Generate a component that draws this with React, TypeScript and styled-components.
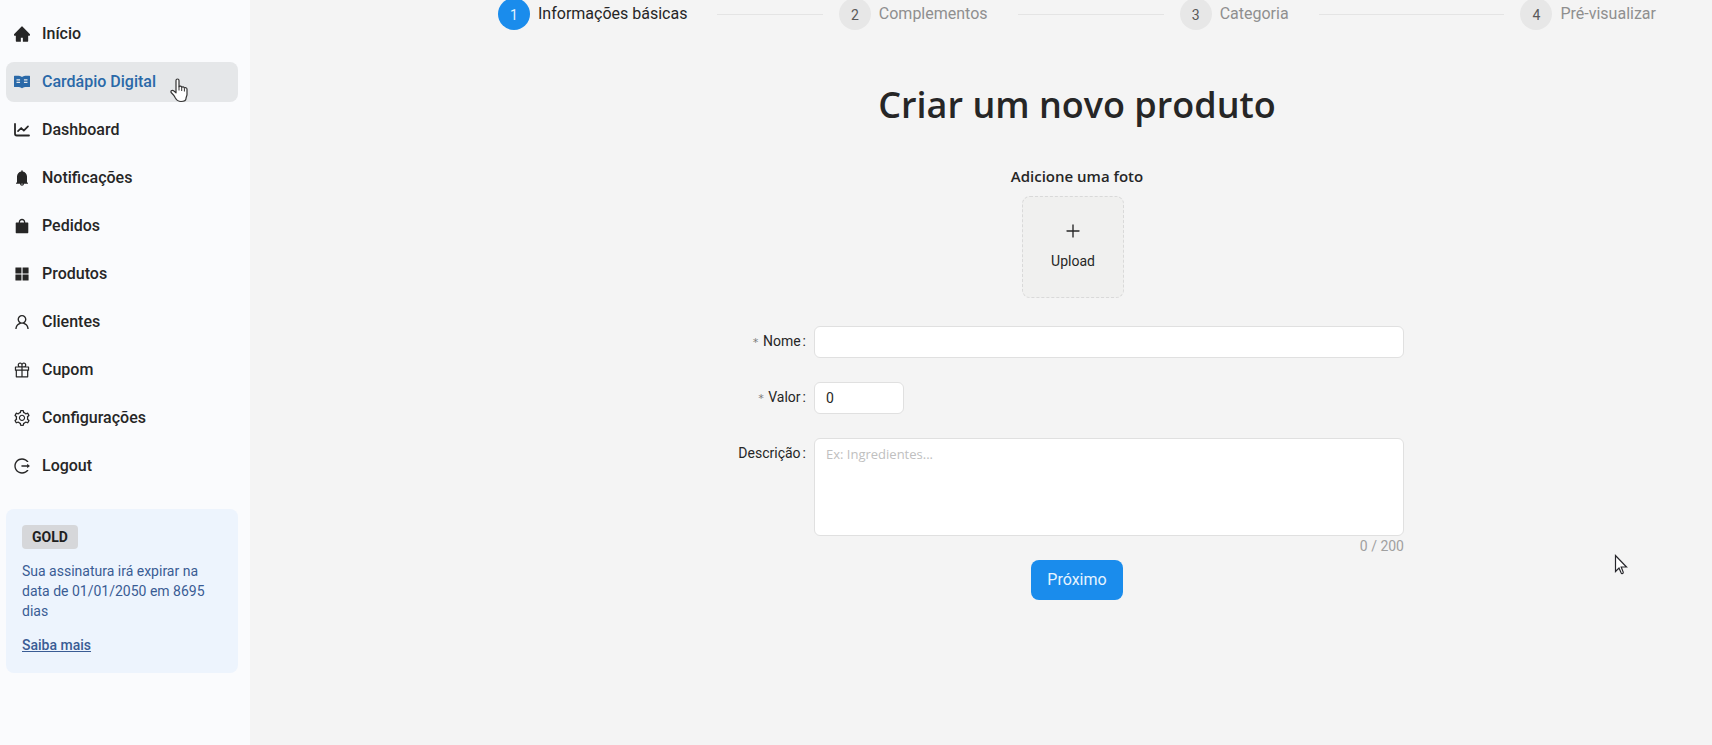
import React from "react";
import styled, { createGlobalStyle } from "styled-components";
import {
  AiFillAppstore,
  AiFillBell,
  AiFillHome,
  AiFillRead,
  AiFillShopping,
  AiOutlineGift,
  AiOutlineLogout,
  AiOutlinePlus,
  AiOutlineSetting,
  AiOutlineUser,
} from "react-icons/ai";

const GlobalStyle = createGlobalStyle`
  *, *::before, *::after { box-sizing: border-box; }
  body {
    margin: 0;
    background: #f4f4f4;
    color: #262626;
    font-family: Roboto, "Liberation Sans", sans-serif;
    font-size: 14px;
    line-height: 20px;
  }
  button, input, textarea { font: inherit; color: inherit; }
`;

const Page = styled.div`
  display: flex;
  min-height: 100vh;
`;

const Sidebar = styled.aside`
  flex: 0 0 250px;
  padding: 14px 12px 14px 6px;
  background: #fafbfd;
`;

const Menu = styled.nav`
  display: flex;
  flex-direction: column;
  gap: 8px;
`;

const MenuItem = styled.a<{ $active?: boolean }>`
  position: relative;
  display: flex;
  align-items: center;
  gap: 12px;
  height: 40px;
  padding: 0 8px;
  border-radius: 8px;
  font-size: 16px;
  font-weight: 500;
  text-decoration: none;
  color: ${(p) => (p.$active ? "#2a69a8" : "#262626")};
  background: ${(p) => (p.$active ? "#e5e7e9" : "transparent")};

  > svg { flex: none; }
`;

const HandCursor = styled.svg`
  position: absolute;
  left: 164px;
  top: 16px;
`;

const PlanCard = styled.section`
  margin-top: 23px;
  padding: 16px 16px 18px;
  border-radius: 8px;
  background: #edf4fd;
  color: #3a5c94;
`;

const PlanTag = styled.strong`
  display: inline-block;
  padding: 2px 10px;
  border-radius: 4px;
  background: #d6d7da;
  color: #1f1f1f;
  font-weight: 700;
`;

const PlanText = styled.p`
  margin: 12px 0 14px;
`;

const PlanLink = styled.a`
  color: inherit;
  font-weight: 500;
`;

const Main = styled.main`
  flex: 1;
  min-width: 0;
  padding: 0 56px 0 248px;
`;

const Steps = styled.ol`
  display: flex;
  gap: 16px;
  margin: -2px 0 0;
  padding: 0;
  list-style: none;
`;

const Step = styled.li<{ $current?: boolean }>`
  flex: 1;
  display: flex;
  align-items: center;
  font-size: 16px;
  white-space: nowrap;
  color: ${(p) => (p.$current ? "#262626" : "#8f8f8f")};

  &:not(:last-child)::after {
    content: "";
    flex: 1;
    height: 1px;
    margin-left: 30px;
    background: #e4e4e4;
  }

  &:last-child { flex: none; }
`;

const StepNumber = styled.span<{ $current?: boolean }>`
  width: 32px;
  height: 32px;
  margin-right: 8px;
  border-radius: 50%;
  font-size: 14px;
  line-height: 34px;
  text-align: center;
  color: ${(p) => (p.$current ? "#e6f4ff" : "#595959")};
  background: ${(p) => (p.$current ? "#1a8cec" : "#e7e7e7")};
`;

const Title = styled.h1`
  margin: 52px 0 0;
  font-family: "Open Sans", "Noto Sans", sans-serif;
  font-size: 36px;
  line-height: 46px;
  font-weight: 600;
  text-align: center;
`;

const PhotoTitle = styled.h2`
  margin: 36px 0 8px;
  font-family: "Open Sans", "Noto Sans", sans-serif;
  font-size: 15px;
  line-height: 24px;
  font-weight: 600;
  text-align: center;
`;

const UploadRow = styled.div`
  display: flex;
  justify-content: center;
  padding-right: 8px;
`;

const UploadButton = styled.button`
  display: flex;
  flex-direction: column;
  align-items: center;
  justify-content: center;
  gap: 12px;
  width: 102px;
  height: 102px;
  border: 1px dashed #d9d9d9;
  border-radius: 8px;
  background: #f0f0ef;
`;

const Form = styled.form`
  margin-top: 28px;
`;

const Field = styled.div`
  display: grid;
  grid-template-columns: 316fr 590fr 252fr;
  margin-bottom: 24px;

  &:last-of-type { margin-bottom: 4px; }
`;

const Label = styled.label`
  padding-right: 8px;
  line-height: 30px;
  text-align: right;

  &::after {
    content: ":";
    margin-left: 2px;
  }
`;

const Required = styled.span`
  margin-right: 4px;
  color: #7a7a7a;
  font-family: "DejaVu Sans Mono", monospace;
  font-size: 11px;
`;

const TextInput = styled.input<{ $short?: boolean }>`
  width: ${(p) => (p.$short ? "90px" : "100%")};
  height: 32px;
  padding: 0 11px;
  border: 1px solid #e0e0e0;
  border-radius: 6px;
  outline: none;
  background: #fff;
`;

const TextArea = styled.textarea`
  display: block;
  width: 100%;
  height: 98px;
  padding: 5px 11px;
  border: 1px solid #e0e0e0;
  border-radius: 6px;
  outline: none;
  resize: none;
  background: #fff;

  &::placeholder {
    color: #c0c0c0;
    font-family: "Open Sans", "Noto Sans", sans-serif;
    font-size: 13px;
    opacity: 1;
  }
`;

const Counter = styled.div`
  color: #a0a0a0;
  text-align: right;
`;

const NextButton = styled.button`
  display: block;
  height: 40px;
  margin: 0 auto;
  padding: 0 16px;
  border: 0;
  border-radius: 8px;
  background: #1a8cec;
  color: #e6f4ff;
  font-size: 16px;
`;

const ArrowCursor = styled.svg`
  position: fixed;
  left: 1614px;
  top: 554px;
`;

const tightBox = "64 64 896 896";

function ChartIcon() {
  return (
    <svg width="16" height="16" viewBox="0 0 16 16" fill="none" stroke="currentColor" strokeLinecap="round" aria-hidden="true">
      <path d="M1 2v9.800a1.700 1.700 0 0 0 1.700 1.700H15" strokeWidth="1.8" />
      <path d="M4 9.200 7.200 6l2.600 2.600L14 4.400" strokeWidth="1.7" strokeLinejoin="round" />
    </svg>
  );
}

const menu = [
  { label: "Início", icon: <AiFillHome size={16} viewBox={tightBox} /> },
  { label: "Cardápio Digital", icon: <AiFillRead size={16} viewBox={tightBox} />, active: true },
  { label: "Dashboard", icon: <ChartIcon /> },
  { label: "Notificações", icon: <AiFillBell size={16} viewBox={tightBox} /> },
  { label: "Pedidos", icon: <AiFillShopping size={16} viewBox={tightBox} /> },
  { label: "Produtos", icon: <AiFillAppstore size={16} viewBox={tightBox} /> },
  { label: "Clientes", icon: <AiOutlineUser size={16} viewBox={tightBox} /> },
  { label: "Cupom", icon: <AiOutlineGift size={16} viewBox={tightBox} /> },
  { label: "Configurações", icon: <AiOutlineSetting size={16} viewBox={tightBox} /> },
  { label: "Logout", icon: <AiOutlineLogout size={16} viewBox={tightBox} /> },
];

const steps = ["Informações básicas", "Complementos", "Categoria", "Pré-visualizar"];

export default function App() {
  return (
    <Page>
      <GlobalStyle />
      <Sidebar>
        <Menu>
          {menu.map(({ label, icon, active }) => (
            <MenuItem key={label} href="#" $active={active}>
              {icon}
              {label}
              {active && (
                <HandCursor width="20" height="25" viewBox="0 0 20 25" aria-hidden="true">
                  <path
                    d="M6 2.5c0-2 3-2 3 0v6.2c.4-1 2.6-.8 2.7.6.6-.9 2.6-.6 2.7.8.6-.8 2.6-.5 2.6 1.2v5.2c0 1.500-1 2.500-1 4 0 2.300-2 3-5 3-3.500 0-4.600-1.700-5.600-3.500-1-2-2.300-3.600-4-5.200-1.400-1.500.6-3.200 2.200-2l2.400 2z"
                    fill="#fff"
                    stroke="#333"
                    strokeWidth="1.2"
                    strokeLinejoin="round"
                  />
                  <path d="M9 8.500v4M11.700 9.500v3.500M14.400 10.500v3" stroke="#333" fill="none" />
                </HandCursor>
              )}
            </MenuItem>
          ))}
        </Menu>
        <PlanCard>
          <PlanTag>GOLD</PlanTag>
          <PlanText>Sua assinatura irá expirar na data de 01/01/2050 em 8695 dias</PlanText>
          <PlanLink href="#">Saiba mais</PlanLink>
        </PlanCard>
      </Sidebar>
      <Main>
        <Steps>
          {steps.map((name, i) => (
            <Step key={name} $current={i === 0}>
              <StepNumber $current={i === 0}>{i + 1}</StepNumber>
              {name}
            </Step>
          ))}
        </Steps>
        <Title>Criar um novo produto</Title>
        <PhotoTitle>Adicione uma foto</PhotoTitle>
        <UploadRow>
          <UploadButton type="button">
            <AiOutlinePlus size={16} viewBox={tightBox} />
            Upload
          </UploadButton>
        </UploadRow>
        <Form>
          <Field>
            <Label htmlFor="nome">
              <Required>*</Required>Nome
            </Label>
            <TextInput id="nome" type="text" />
          </Field>
          <Field>
            <Label htmlFor="valor">
              <Required>*</Required>Valor
            </Label>
            <TextInput id="valor" type="text" inputMode="decimal" defaultValue="0" $short />
          </Field>
          <Field>
            <Label htmlFor="descricao">Descrição</Label>
            <div>
              <TextArea id="descricao" maxLength={200} placeholder="Ex: Ingredientes..." />
              <Counter>0 / 200</Counter>
            </div>
          </Field>
          <NextButton type="button">Próximo</NextButton>
        </Form>
      </Main>
      <ArrowCursor width="14" height="22" viewBox="0 0 14 22" aria-hidden="true">
        <path
          d="M1.500 1.500v16l3.500-3.400 2.200 5c.5 1 2.500.4 2-1L7.200 13H12.500z"
          fill="#fff"
          stroke="#26262b"
          strokeWidth="1.2"
        />
      </ArrowCursor>
    </Page>
  );
}
